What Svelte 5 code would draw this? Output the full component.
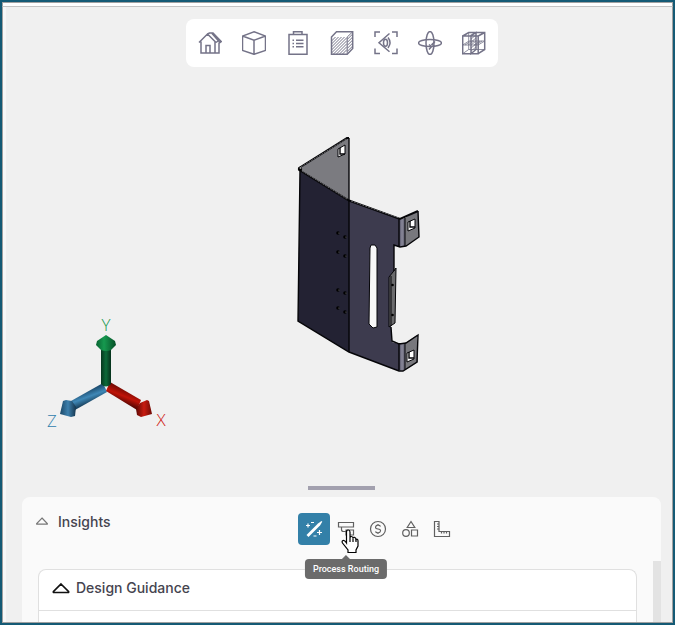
<script lang="ts">
  const tools = ['Home', 'Standard view', 'Report', 'Section', 'Look at', 'Orbit', 'Mesh'];
  const tabs = ['Design', 'Process Routing', 'Cost', 'Shapes', 'Measure'];
  const holes = [
    [338, 233], [345, 237], [338, 252], [345, 256],
    [338, 290], [345, 293], [338, 308], [345, 312]
  ];

  let activeTab = $state('Design');
  let hoveredTab = $state('Process Routing');
  let insightsOpen = $state(true);
</script>

<div class="window">
  <div class="titlebar"></div>
  <main class="workspace">
    <nav class="toolbar" aria-label="View tools">
      {#each tools as tool}
        <button class="tool" aria-label={tool}>
          <svg viewBox="0 0 24 24" width="24" height="24">
            {#if tool === 'Home'}
              <path d="M1 11.500 9.500 3 18 11.500M9.500 3l2-1h3.500L23.300 10.500l-1.300 1L14 2.500M3 10.500V22h18V11.500M17 11v11M8 22v-7.500h4V22M18 11.500l2-1.500" />
            {:else if tool === 'Standard view'}
              <path d="M12 .8 23.500 5v14.500L12 23.300.5 19.500V5zM.5 5 12 9.200 23.500 5M12 9.200v14" />
            {:else if tool === 'Report'}
              <path d="M3 3.500h18v19.700H3zM7.500 3.500V.7H16v2.800M10 9.300h7.500M10 12.500h7.500M10 15.700h7.500" />
              <path d="M6.500 9.300H8M6.500 12.500H8M6.500 15.700H8" />
            {:else if tool === 'Section'}
              <path d="M1.500 6 6.500.8h16.200v16.700l-5.500 5.700H1.500z" />
              <path class="hatch" d="M17.200 6v17.200M17.200 6l5.500-5.200M1.500 10l4-4M1.500 13l7-7M1.500 16l10-10M1.500 19l13-13M1.500 22 17 6.500M3.500 23 17 9.500M6.500 23 17 12.500M9.500 23l7.500-7.500M12.500 23l4.500-4.500M17.200 8.500l5.500-5.500M17.200 11.500l5.500-5.500M17.200 14.500l5.500-5.500M17.200 17.500l5.500-5.500M17.200 20.500l5.500-5.500" />
            {:else if tool === 'Look at'}
              <path d="M6 1H1v5M18 1h5v5M1 17.500v5h5M23 17.500v5h-5M15.500 2.500 5 11.700l10.500 9M14 6.500q4 5 0 10.500" />
              <ellipse cx="11.500" cy="11.700" rx="2" ry="3.500" />
            {:else if tool === 'Orbit'}
              <ellipse cx="12" cy="12" rx="11.500" ry="3.500" />
              <ellipse cx="12" cy="12" rx="4" ry="11.500" />
              <path d="M17 10.500l-3 3 3 2M11 13.500l2.500 2-2.500 3" />
            {:else}
              <path d="M.7 5h15.500v17.700H.7zM.7 5l6-3.500h16v17l-6.500 4.200M16.200 5l6.500-3.500M9 4.500l5-3v17L9 22.700z" />
              <path class="thin" d="M6.700 1.500v17h16M.7 22.700l6-4.200M.7 14 7 10h15.700l-6.500 4zM9 8l5-4M9 11l5-4M9 14l5-4M9 17l5-4M9 20l5-4M3 14l6-4M6 14l6-4M12 14l6-4M14 14l6-4" />
            {/if}
          </svg>
        </button>
      {/each}
    </nav>

    <section class="stage" aria-label="3D model">
      <svg class="model" viewBox="252 133 180 288" width="180" height="288">
        <defs>
          <linearGradient id="bend">
            <stop offset="0" stop-color="#4b4a5d" />
            <stop offset="0.5" stop-color="#8a899b" />
            <stop offset="1" stop-color="#5b5a69" />
          </linearGradient>
        </defs>
        <path d="M299 168 347 138h2v62l-49-30z" fill="#7b7b80" />
        <path d="M300 171 349 201v151L298 321z" fill="#232233" />
        <path d="M349 201 400 219v28l-6-2v27l-3 55 1 15 7 2v27L349 352z" fill="#3d3b4e" />
        <path d="M399 220l6-2v28l-6 1z" fill="url(#bend)" />
        <path d="M405 218l13-7 1 26-14 9z" fill="#78787d" />
        <path d="M399 343l6 0v27l-6 1z" fill="url(#bend)" />
        <path d="M405 343l12-8 1 27-13 8z" fill="#78787d" />
        <path d="M389 277l4-5 3-4-1 55-6 4z" fill="#6b6b6d" />
        <path d="M371 245h4l2 3v79l-4 1-4-4 1-76z" fill="#f8f8f8" />
        <path d="M338 149l7-4v9l-7 3zM408 222l7-3v9l-7 3zM407 353l7-3v9l-7 3z" fill="#fff" />
        <path d="M300 171l-2 150 51 31 50 19h4l14-9 1-27-12 8-7 1-7-3-1-14M349 138v62M349 201v151M399 219v28M399 343v27" class="edge" />
        <path d="M299 168 347 138h2M300 170.500 349 200.500 400 219l18-8" class="edge bold" />
        <path d="M418 211l1 26-13 9-6 1-6-2v26" class="edge" />
        <path d="M405 218v28M405 343v26M389 277l4-5 3-4-1 55-6 4zM391 276v50" class="edge fine" />
        <path d="M371 245h4l2 3v79l-4 1-4-4 1-76zM338 149l7-4v9l-7 3zM408 222l7-3v9l-7 3zM407 353l7-3v9l-7 3z" class="edge fine" />
        <path d="M301 167 346 139M302 171 347 199M351 201 399 218" class="highlight" />
        <path d="M340 148v6h5M410 221v6h5M409 352v6h5" class="edge" />
        {#each holes as [x, y]}
          <circle cx={x} cy={y} r="1.800" fill="#000" />
          <circle cx={x + 1} cy={y} r="0.600" fill="#888" />
        {/each}
        <circle cx="392.500" cy="285" r="1.300" />
        <circle cx="392.500" cy="315" r="1.300" />
        <circle cx="300" cy="169" r="2.200" />
        <circle cx="300.500" cy="168" r="1" fill="#999" />
      </svg>

      <svg class="axes" viewBox="40 310 135 125" width="135" height="125">
        <defs>
          <linearGradient id="green">
            <stop offset="0" stop-color="#07371f" />
            <stop offset="0.5" stop-color="#0c6a39" />
            <stop offset="1" stop-color="#06301b" />
          </linearGradient>
          <linearGradient id="greenTip">
            <stop offset="0" stop-color="#086332" />
            <stop offset="0.4" stop-color="#16994f" />
            <stop offset="1" stop-color="#064f27" />
          </linearGradient>
          <linearGradient id="red" x1="0.600" y1="0.300" x2="0.400" y2="0.700">
            <stop offset="0" stop-color="#7a0c04" />
            <stop offset="0.5" stop-color="#c01408" />
            <stop offset="1" stop-color="#5d0803" />
          </linearGradient>
          <linearGradient id="redTip">
            <stop offset="0" stop-color="#5d0803" />
            <stop offset="0.5" stop-color="#c81b10" />
            <stop offset="1" stop-color="#6d0a04" />
          </linearGradient>
          <linearGradient id="blue" x1="0.400" y1="0.300" x2="0.600" y2="0.700">
            <stop offset="0" stop-color="#1d4d70" />
            <stop offset="0.5" stop-color="#3f88b7" />
            <stop offset="1" stop-color="#1b4562" />
          </linearGradient>
          <linearGradient id="blueTip">
            <stop offset="0" stop-color="#1b4766" />
            <stop offset="0.5" stop-color="#3d80ad" />
            <stop offset="1" stop-color="#15354d" />
          </linearGradient>
        </defs>
        <path d="M103 383l-32 18 4 9 32-18z" fill="url(#blue)" />
        <path d="M66 400l-3 1-3 13 11 3 4-1 1-9-4-6z" fill="url(#blueTip)" />
        <path d="M110 382l31 18-4 10-31-19z" fill="url(#red)" />
        <path d="M147 400l2 1 3 13-11 3-4-2-1-6 4-6z" fill="url(#redTip)" />
        <path d="M101 348h10v36q-5 5-10 0z" fill="url(#green)" />
        <path d="M106 335l9 6 1 4-5 5q-5 2-10 0l-5-5 1-4z" fill="url(#greenTip)" />
        <text x="106" y="331" fill="#16994f">Y</text>
        <text x="52" y="427" fill="#3080ad">Z</text>
        <text x="161" y="426" fill="#cf1a10">X</text>
      </svg>
    </section>

    <div class="handle" role="separator"></div>

    <section class="insights">
      <header class="insights-header">
        <button class="title" onclick={() => (insightsOpen = !insightsOpen)}>
          <svg viewBox="0 0 12 8" width="12" height="8"><path d="M6 1 11.300 6.500q.3.700-.3.700H1q-.6 0-.3-.7z" /></svg>
          Insights
        </button>
        <div class="tabs">
          {#each tabs as tab}
            <button
              class="tab"
              class:active={activeTab === tab}
              aria-label={tab}
              onclick={() => (activeTab = tab)}
              onmouseenter={() => (hoveredTab = tab)}
            >
              <svg viewBox="0 0 20 20" width="20" height="20">
                {#if tab === 'Design'}
                  <path class="wand" d="M2.500 16 14 4.500l3.500-2.500.8.800L16 6.500 4.500 18z" />
                  <path d="M4 4.500v4M2 6.500h4M7 3.500h3M15.500 11v5M13 13.500h5M9.500 17h3" />
                {:else if tab === 'Process Routing'}
                  <path d="M2.500 3.500h15v4.500h-15zM5.500 8v2.500q0 2 2 2h2.500M10 11h7.500v5H10z" />
                {:else if tab === 'Cost'}
                  <circle cx="10" cy="10" r="7.500" />
                  <path d="M12.500 7.500Q12 6.200 10 6.200T7.600 8t2.400 2 2.500 2-2.500 1.800T7.500 12.500M10 5v1M10 14v1" />
                {:else if tab === 'Shapes'}
                  <path d="M11 2.500 14.800 8.500H7.200zM11.500 11h6v6h-6z" />
                  <circle cx="6" cy="14" r="3.300" />
                {:else}
                  <path d="M2.500 2.500H7v10h10.500V17.500h-15zM7 5H5M7 7.500H5M7 10H5M9.500 12.500v2M12 12.500v2M14.500 12.500v2" />
                {/if}
              </svg>
              {#if hoveredTab === tab}
                <span class="tooltip" role="tooltip">{tab}</span>
                <svg class="pointer" viewBox="0 0 18 25" width="18" height="25">
                  <path d="M5.500 14V3q0-2 1.700-2T9 3v6q0-1.500 1.500-1.500T12 9.500q0-1.500 1.500-1.200T15 10.500q2-1 2 1.500v5l-2 4v2.500H7V21l-5.500-7q-1-2 .5-2.500T5.500 14z" />
                  <path d="M9 9v4M12 9.500V13M15 10.500V13" />
                </svg>
              {/if}
            </button>
          {/each}
        </div>
      </header>

      {#if insightsOpen}
        <div class="scroll-area">
          <article class="card">
            <h2>
              <svg viewBox="0 0 18 12" width="18" height="12"><path d="M9 2 16.500 9.500q.5 1-.5 1H2q-1 0-.5-1z" /></svg>
              Design Guidance
            </h2>
          </article>
          <div class="track"></div>
        </div>
      {/if}
    </section>
  </main>
</div>

<style>
  :global(body) {
    margin: 0;
    font-family: Inter, 'Liberation Sans', sans-serif;
  }

  button {
    padding: 0;
    border: none;
    background: none;
    font: inherit;
    cursor: pointer;
  }

  svg {
    display: block;
    flex: none;
  }

  .window {
    box-sizing: border-box;
    height: 100vh;
    display: flex;
    flex-direction: column;
    border: 2px solid #145a75;
    background: #f0f0f0;
  }

  .titlebar {
    height: 3px;
    flex: none;
    background: #fff;
    border: 1px solid #a0a0a0;
    border-bottom-color: #c4c4c4;
  }

  .workspace {
    flex: 1;
    min-height: 0;
    display: flex;
    flex-direction: column;
    align-items: center;
    padding: 12px 11px 0 19px;
    border: 1px solid #a0a0a0;
    border-top: none;
    background: linear-gradient(to right, #f8f8f8 3px, #f0f0f0 3px);
  }

  .toolbar {
    display: flex;
    gap: 12px;
    padding: 8px;
    border-radius: 8px;
    background: #fff;
  }

  .tool {
    width: 32px;
    height: 32px;
    display: grid;
    place-items: center;
  }

  .tool svg {
    fill: none;
    stroke: #747388;
    stroke-width: 1.5;
  }

  .tool .thin {
    stroke-width: 0.8;
  }

  .tool .hatch {
    stroke-width: 1;
  }

  .stage {
    position: relative;
    flex: 1;
    min-height: 0;
    align-self: stretch;
    display: flex;
    align-items: center;
    justify-content: center;
  }

  .edge {
    fill: none;
    stroke: #050508;
    stroke-width: 1.4;
  }

  .bold {
    stroke-width: 2;
  }

  .fine {
    stroke-width: 1;
  }

  .highlight {
    fill: none;
    stroke: #99999b;
    stroke-width: 0.6;
    stroke-dasharray: 2 1;
  }

  .axes {
    position: absolute;
    left: 18px;
    bottom: 51px;
  }

  .axes text {
    font-family: 'Open Sans', sans-serif;
    font-weight: 300;
    font-size: 17px;
    text-anchor: middle;
  }

  .handle {
    width: 67px;
    height: 4px;
    margin-bottom: 7px;
    background: #a2a0ae;
  }

  .insights {
    height: 20vh;
    align-self: stretch;
    display: flex;
    flex-direction: column;
    border-radius: 8px 8px 0 0;
    background: #fafafa;
    color: #45444f;
    overflow: hidden;
  }

  .insights-header {
    height: 64px;
    flex: none;
    display: flex;
    align-items: center;
    padding-left: 14px;
  }

  .title {
    width: 262px;
    display: flex;
    align-items: center;
    gap: 10px;
    padding-bottom: 16px;
    color: inherit;
    font-size: 14px;
    font-weight: 500;
  }

  .title svg {
    fill: none;
    stroke: #777;
    stroke-width: 1.2;
  }

  .tabs {
    display: flex;
  }

  .tab {
    position: relative;
    width: 32px;
    height: 32px;
    display: grid;
    place-items: center;
    border-radius: 4px;
    fill: none;
    stroke: #606060;
    stroke-width: 1.2;
  }

  .active {
    background: #3380a8;
    stroke: #fff;
  }

  .wand {
    fill: #fff;
    stroke: none;
  }

  .tooltip {
    position: absolute;
    z-index: 1;
    top: 46px;
    left: 50%;
    transform: translateX(-50%);
    padding: 0 8px;
    border-radius: 4px;
    background: #6b6b6b;
    color: #fff;
    font-family: Roboto, sans-serif;
    font-size: 9px;
    font-weight: 500;
    line-height: 20px;
    white-space: nowrap;
  }

  .tooltip::before {
    content: '';
    position: absolute;
    left: 50%;
    bottom: 100%;
    margin-left: -4px;
    border: 4px solid transparent;
    border-top: none;
    border-bottom-color: #6b6b6b;
  }

  .pointer {
    position: absolute;
    z-index: 2;
    top: 16px;
    left: 11px;
    fill: #fff;
    stroke: #000;
    stroke-width: 1.2;
  }

  .scroll-area {
    flex: 1;
    min-height: 0;
    display: flex;
  }

  .card {
    flex: 1;
    margin: 8px 16px 0;
    border: 1px solid #e0e0e0;
    border-bottom: none;
    border-radius: 8px 8px 0 0;
    background: #fff;
  }

  .card h2 {
    display: flex;
    align-items: center;
    gap: 6px;
    height: 41px;
    box-sizing: border-box;
    margin: 0;
    padding: 0 13px 5px;
    border-bottom: 1px solid #e0e0e0;
    font-size: 14px;
    font-weight: 500;
  }

  .card svg {
    fill: none;
    stroke: #111;
    stroke-width: 1.7;
  }

  .track {
    width: 8px;
    background: #e3e3e3;
  }
</style>
